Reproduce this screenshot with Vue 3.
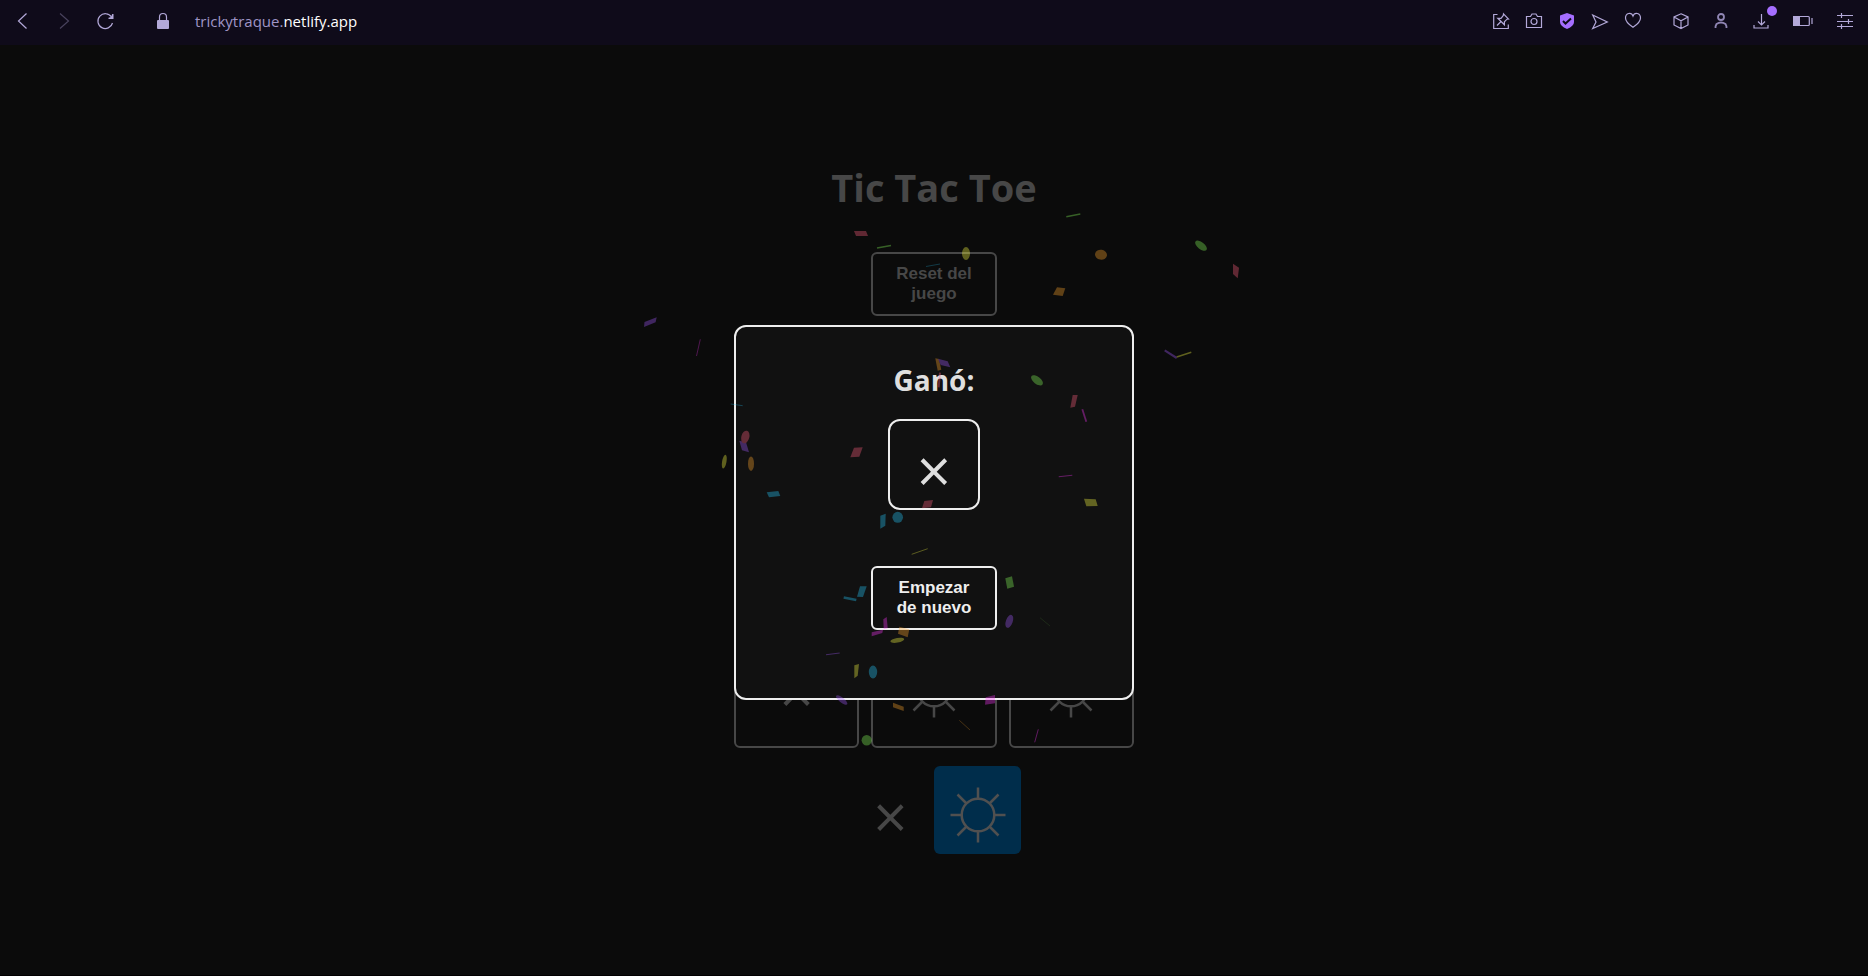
<script setup>
import { ref } from 'vue'

const cells = ref(['', '', '', '', '', '', 'x', 'o', 'o'])

const colors = {
  blue: '#26ccff',
  purple: '#a25afd',
  red: '#ff5e7e',
  green: '#88ff5a',
  yellow: '#fcff42',
  orange: '#ffa62d',
  magenta: '#ff36ff',
}

const quads = [
  ['red', '854,231 866,231 868,236 856,236'],
  ['purple', '644.5,322 656.7,317.3 655.6,322.3 644,327'],
  ['orange', '935.3,358.3 939,359 941.3,369.7 937.7,370.7'],
  ['purple', '938,358.7 947.7,361.3 950.3,367.3 940.7,365'],
  ['red', '1233,263.7 1239,267.7 1237.7,278.3 1233,274'],
  ['orange', '1057,287.3 1065.3,288.3 1062.7,296 1053,294.7'],
  ['purple', '739.3,440.7 746,442.3 749,452.3 742,450.3'],
  ['blue', '766.7,492.3 778.3,491 780.3,496 769,497.3'],
  ['red', '854,447.7 862.7,447.3 859.3,456.7 850.3,457.3'],
  ['red', '924.3,501 933,500 931,507.3 922,508.3'],
  ['blue', '880.3,515.7 885.7,513.7 885.3,525.7 880.3,528.7'],
  ['red', '1072.7,395 1077.7,395 1075,406.7 1070.3,407.7'],
  ['yellow', '1084,498.7 1095.7,499.3 1097.7,506 1086.3,506.3'],
  ['blue', '860,586.3 866.7,586.3 863,597 857,596.7'],
  ['magenta', '883.3,619.3 886.7,617 887.7,628.3 883.7,629.3'],
  ['magenta', '871.7,632.3 883,629.7 882.3,633 871.7,636.3'],
  ['orange', '899.3,626.7 909.3,629.3 907.7,637.3 898,633.7'],
  ['yellow', '854.3,665.3 859,664 857.7,675.7 854.3,678.3'],
  ['orange', '893,702.7 903.7,706.7 903.7,711 893,707.3'],
  ['green', '1005.3,578.3 1012,576.3 1014,586.7 1007.3,588.7'],
  ['magenta', '985.7,697.3 995,695 995,703.3 985,704.7'],
]

// color, cx, cy, rx, ry, rotation
const ovals = [
  ['yellow', 966, 253.5, 4, 6.5, 0],
  ['orange', 1101, 254.7, 6, 5, 10],
  ['green', 1201, 245.7, 7, 3.4, 38],
  ['green', 1037, 380.3, 7, 3.6, 38],
  ['red', 745.3, 437, 4, 6.5, 15],
  ['orange', 751, 463.7, 3, 7.2, 0],
  ['yellow', 724.3, 461.7, 2.2, 7, 10],
  ['blue', 897.7, 517.3, 5.3, 5.5, 0],
  ['yellow', 897.3, 640.3, 7, 2.3, -10],
  ['blue', 873, 672, 4.2, 6.4, 0],
  ['purple', 841.7, 700, 7, 2.4, 38],
  ['purple', 1009.3, 621.3, 3.4, 6.8, 20],
  ['green', 866.7, 740.3, 5.1, 5.3, 0],
]

// color, x1, y1, x2, y2, thickness
const slivers = [
  ['green', 877, 248, 891, 245.5, 1.7],
  ['blue', 926, 266.5, 940, 264, 0.7],
  ['magenta', 700.3, 339.3, 696.5, 356, 0.8],
  ['red', 940, 372.7, 938.7, 387.3, 2],
  ['blue', 730.7, 404, 742.7, 405.7, 0.8],
  ['green', 1066.3, 216.7, 1080.3, 214, 1.4],
  ['purple', 1164.7, 350.3, 1176.7, 358, 2.1],
  ['yellow', 1176.7, 357, 1191.3, 352.3, 1.6],
  ['magenta', 1082.3, 409.3, 1086.3, 421.7, 1.8],
  ['magenta', 1058.7, 476.7, 1072.3, 475.3, 1.1],
  ['yellow', 911.7, 554.3, 927.7, 548.7, 0.9],
  ['blue', 843.7, 597.5, 856.3, 600, 2.6],
  ['purple', 826, 654.7, 839.7, 653, 1.1],
  ['green', 1040, 617.7, 1050, 626, 0.3],
  ['orange', 959.3, 720.3, 970, 730, 0.7],
  ['magenta', 1038.3, 729.3, 1034.7, 742.3, 1],
]
</script>

<template>
  <div class="window">
    <header class="toolbar">
      <nav class="history">
        <button type="button" aria-label="Back">
          <svg width="16" height="16" viewBox="0 0 16 16"><path d="M11.5 .5 3.500 8l8 7.500" /></svg>
        </button>
        <button type="button" aria-label="Forward" disabled>
          <svg width="16" height="16" viewBox="0 0 16 16"><path d="M4 .5 12.500 8 4 15.500" /></svg>
        </button>
        <button type="button" aria-label="Reload">
          <svg width="16" height="16" viewBox="0 0 16 16">
            <path d="M15.500 10A7.400 7.400 0 1 1 14.500 4" />
            <path class="solid" d="M16.500 1V6H11.500v-1.200l2.500-.8 1.200-3z" />
          </svg>
        </button>
      </nav>
      <div class="address">
        <svg width="12" height="16" viewBox="0 0 12 16">
          <path d="M2.500 8V4a3.500 3.500 0 0 1 7 0v4" />
          <rect class="solid" x="0" y="7" width="12" height="9" rx="1" />
        </svg>
        <span class="url">trickytraque.<b>netlify.app</b></span>
      </div>
      <div class="actions">
        <div class="group">
          <button type="button" aria-label="Edit pin">
            <svg width="16" height="16" viewBox="0 0 16 16">
              <path d="M4.500 1.500H.7v14h14.600V11.500" />
              <path d="M10.500 .8 15.500 6l-1.500.2-2.600 2.600v3L4.800 5.300H8L10.300 2.500zM8 8.500 4 12.500" />
            </svg>
          </button>
          <button type="button" aria-label="Snapshot">
            <svg width="16" height="16" viewBox="0 0 16 16">
              <path d="M.5 3.500H4.500l1.500-2.500h4l1.500 2.500h4v11H.5z" />
              <circle cx="8" cy="8.500" r="3" />
            </svg>
          </button>
          <button type="button" aria-label="Ad blocker">
            <svg width="16" height="16" viewBox="0 0 16 16">
              <path class="accent" d="M8 0 15 2.500V9q0 4-7 7Q1 13 1 9V2.500z" />
              <path class="tick" d="M4 8l2.500 2.500L12 5.500" />
            </svg>
          </button>
          <button type="button" aria-label="Flow">
            <svg width="16" height="16" viewBox="0 0 16 16"><path d="M.7 2 15.300 9 .7 15.500 4 9z" /></svg>
          </button>
          <button type="button" aria-label="Add to favourites">
            <svg width="16" height="16" viewBox="0 0 16 16">
              <path d="M8 14.300C3 11 .5 8.500 .5 5 .5-.3 6.500-1 8 3 9.500-1 15.500-.3 15.500 5 15.500 8.500 13 11 8 14.300z" />
            </svg>
          </button>
        </div>
        <div class="group wide">
          <button type="button" aria-label="Extensions">
            <svg width="16" height="16" viewBox="0 0 16 16">
              <path d="M8 .8l7 3.200v8l-7 3.500L1 12V4zM1 4l7 3.700L15 4M8 7.700v7.500" />
            </svg>
          </button>
          <button type="button" aria-label="Profile">
            <svg class="thick" width="16" height="16" viewBox="0 0 16 16">
              <circle cx="8" cy="4" r="3" />
              <path d="M2.500 15q-.2-2 1-4Q8 8 12.500 11q1.200 2 1 4" />
            </svg>
          </button>
          <button type="button" class="download" aria-label="Downloads">
            <svg width="16" height="16" viewBox="0 0 16 16">
              <path d="M8.500 1v11M5 8.500 8.500 12 12 8.500M1 12v3h14v-3" />
            </svg>
          </button>
          <button type="button" aria-label="Battery saver">
            <svg width="20" height="16" viewBox="0 0 20 16">
              <rect x=".7" y="3.500" width="15.600" height="9" rx="1" />
              <rect class="solid" x="0" y="3" width="7" height="10" />
              <path d="M19 5v6" />
            </svg>
          </button>
          <button type="button" aria-label="Easy setup">
            <svg width="16" height="16" viewBox="0 0 16 16">
              <path d="M0 2.500h16M0 8.500h16M0 13.500h16M4.500 0v5M11.500 6v5M4.500 11v5" />
            </svg>
          </button>
        </div>
      </div>
    </header>

    <main class="stage">
      <svg width="0" height="0" class="defs">
        <symbol id="sun" viewBox="-28 -28 56 56">
          <circle r="16.300" />
          <path d="M0-17V-27.500M0 17V27.500M-17 0H-27.500M17 0H27.500M-12-12-20.500-20.500M12-12 20.500-20.500M-12 12-20.500 20.500M12 12 20.500 20.500" />
        </symbol>
      </svg>

      <h1>Tic Tac Toe</h1>
      <button type="button" class="btn dim">Reset del juego</button>
      <section class="board">
        <div v-for="(c, i) in cells" :key="i" class="cell">
          <span v-if="c === 'x'" class="cross">×</span>
          <svg v-else-if="c === 'o'" class="sun" width="56" height="56"><use href="#sun" /></svg>
        </div>
      </section>
      <section class="turn">
        <div class="player"><span class="cross">×</span></div>
        <div class="player active">
          <svg class="sun" width="56" height="56"><use href="#sun" /></svg>
        </div>
      </section>

      <div class="overlay">
        <section class="modal" role="dialog" aria-labelledby="result">
          <h2 id="result">Ganó:</h2>
          <div class="winner"><span class="cross">×</span></div>
          <button type="button" class="btn">Empezar de nuevo</button>
        </section>
      </div>

      <svg class="confetti" width="640" height="560" viewBox="620 200 640 560" aria-hidden="true">
        <polygon v-for="(q, i) in quads" :key="'q' + i" :points="q[1]" :fill="colors[q[0]]" />
        <ellipse
          v-for="(o, i) in ovals" :key="'o' + i" :rx="o[3]" :ry="o[4]" :fill="colors[o[0]]"
          :transform="`translate(${o[1]} ${o[2]}) rotate(${o[5]})`"
        />
        <line
          v-for="(s, i) in slivers" :key="'s' + i" :x1="s[1]" :y1="s[2]" :x2="s[3]" :y2="s[4]"
          :stroke="colors[s[0]]" :stroke-width="s[5]"
        />
      </svg>
    </main>
  </div>
</template>

<style>
body {
  background: #0b0b0b;
}
</style>

<style scoped>
.window {
  min-height: 100vh;
  box-sizing: border-box;
  display: flex;
  flex-direction: column;
  border-bottom: 1px solid #020001;
  background: #0b0b0b;
  font-family: "Open Sans", "Noto Sans", sans-serif;
}

.toolbar {
  height: 45px;
  box-sizing: border-box;
  padding: 0 15px 3px;
  display: flex;
  align-items: center;
  background: #0f0b1a;
}

.toolbar button {
  display: flex;
  padding: 0;
  border: 0;
  background: none;
}

.toolbar svg {
  fill: none;
  stroke: #b3a9d9;
  stroke-width: 1.2;
  overflow: visible;
}

.toolbar button:disabled {
  opacity: 0.35;
}

.toolbar .solid {
  fill: #b3a9d9;
  stroke: none;
}

.toolbar .accent {
  fill: #a56eff;
  stroke: none;
}

.toolbar .tick {
  stroke: #0f0b1a;
  stroke-width: 2;
}

.toolbar .thick {
  stroke: #9086b4;
  stroke-width: 1.8;
}

.history {
  display: flex;
  gap: 25px;
}

.address {
  flex: 1;
  margin-left: 44px;
  display: flex;
  align-items: center;
  gap: 26px;
}

.url {
  font-size: 15px;
  line-height: 20px;
  color: #9f95c6;
}

.url b {
  font-weight: 400;
  color: #fff;
}

.actions {
  display: flex;
  gap: 32px;
}

.group {
  display: flex;
  gap: 17px;
}

.group.wide {
  gap: 24px;
}

.download {
  position: relative;
}

.download::after {
  content: "";
  position: absolute;
  top: -7px;
  right: -8px;
  width: 10px;
  height: 10px;
  border-radius: 50%;
  background: #a56eff;
}

.stage {
  position: relative;
  flex: 1;
  display: flex;
  flex-direction: column;
  align-items: center;
  padding: 115px 0 24px;
  color: #474747;
}

.defs {
  position: absolute;
}

h1,
h2 {
  margin: 0;
  font-weight: 700;
}

h1 {
  font-size: 38px;
  line-height: 54px;
}

.btn {
  width: 126px;
  height: 64px;
  padding: 0 16px;
  border: 2px solid #eee;
  border-radius: 6px;
  background: transparent;
  color: #eee;
  font: 700 17px/20px "Liberation Sans", sans-serif;
}

.btn.dim {
  margin-top: 38px;
  border-color: #474747;
  color: #474747;
}

.board {
  width: 400px;
  margin-top: 33px;
  display: grid;
  grid-template-columns: repeat(3, 1fr);
  grid-auto-rows: 125px;
  gap: 12px;
}

.cell,
.player,
.winner {
  box-sizing: border-box;
  display: grid;
  place-items: center;
}

.cell {
  border: 2px solid #474747;
  border-radius: 6px;
  padding-top: 8px;
}

.cross {
  padding-top: 2px;
  font-size: 60px;
  font-weight: 500;
  line-height: 60px;
}

.sun {
  fill: none;
  stroke: currentColor;
  stroke-width: 2.5;
}

.turn {
  display: flex;
  margin-top: 18px;
}

.player {
  width: 87px;
  height: 88px;
  padding-top: 10px;
  border-radius: 6px;
}

.player.active {
  background: #002d4b;
  color: #505050;
}

.overlay {
  position: absolute;
  inset: 0;
  padding-top: 5px;
  display: grid;
  place-items: center;
}

.modal {
  width: 400px;
  height: 375px;
  box-sizing: border-box;
  padding-top: 32px;
  border: 2px solid #eee;
  border-radius: 12px;
  background: #111;
  color: #dfdfdf;
  display: flex;
  flex-direction: column;
  align-items: center;
}

h2 {
  font-size: 28px;
  line-height: 42px;
}

.winner {
  width: 92px;
  height: 91px;
  margin: 18px 0 56px;
  padding-top: 8px;
  border: 2px solid #eee;
  border-radius: 12px;
}

.confetti {
  position: absolute;
  top: 155px;
  left: calc(50% - 314px);
  opacity: 0.35;
  pointer-events: none;
}
</style>
